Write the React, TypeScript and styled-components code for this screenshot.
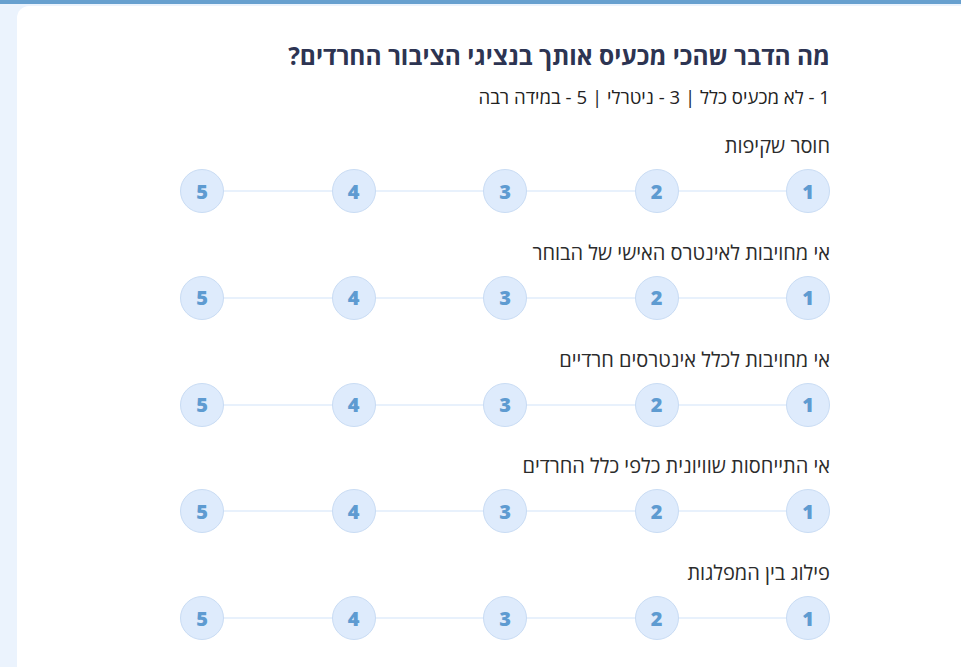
import styled, { createGlobalStyle } from "styled-components";

const GlobalStyle = createGlobalStyle`
  html, body {
    margin: 0;
    padding: 0;
    background: #ebf3fd;
  }
  body {
    font-family: "Open Sans", "DejaVu Sans", sans-serif;
  }
`;

const TopBar = styled.div`
  height: 4px;
  background: #67a0cf;
`;

const PageWrapper = styled.div`
  min-height: 663px;
  padding: 2px 0 0 17px;
  box-sizing: border-box;
  display: flex;
`;

const Card = styled.main`
  flex: 1;
  background: #ffffff;
  border-top-left-radius: 12px;
  padding: 34px 131px 0 163px;
  direction: rtl;
`;

const Title = styled.h1`
  margin: 0;
  font-size: 24.5px;
  font-weight: 700;
  line-height: 32px;
  color: #2d3452;
`;

const Legend = styled.p`
  margin: 13px 0 0;
  font-size: 18.6px;
  line-height: 24px;
  color: #222;
`;

const QuestionList = styled.div`
  margin-top: 23px;
  display: flex;
  flex-direction: column;
  gap: 25.75px;
`;

const Question = styled.section`
  display: flex;
  flex-direction: column;
  gap: 9px;
`;

const Label = styled.div`
  font-size: 20px;
  line-height: 28px;
  color: #2b2b2b;
`;

const Scale = styled.div`
  position: relative;
  display: flex;
  justify-content: space-between;
  align-items: center;

  &::before {
    content: "";
    position: absolute;
    left: 22px;
    right: 22px;
    top: 50%;
    height: 2px;
    margin-top: -1px;
    background: #e8f1fc;
  }
`;

const Option = styled.button`
  position: relative;
  width: 44px;
  height: 44px;
  border-radius: 50%;
  border: 1px solid #c9dcf4;
  background: #deebfc;
  color: #5e9bd1;
  font-family: "Open Sans", "DejaVu Sans", sans-serif;
  font-size: 20px;
  font-weight: 800;
  display: flex;
  align-items: center;
  justify-content: center;
  padding: 0;
  cursor: pointer;
`;

const questions = [
  "חוסר שקיפות",
  "אי מחויבות לאינטרס האישי של הבוחר",
  "אי מחויבות לכלל אינטרסים חרדיים",
  "אי התייחסות שוויונית כלפי כלל החרדים",
  "פילוג בין המפלגות",
];

export default function App() {
  return (
    <>
      <GlobalStyle />
      <TopBar />
      <PageWrapper>
        <Card>
          <Title>מה הדבר שהכי מכעיס אותך בנציגי הציבור החרדים?</Title>
          <Legend>1 - לא מכעיס כלל | 3 - ניטרלי | 5 - במידה רבה</Legend>
          <QuestionList>
            {questions.map(q => (
              <Question key={q}>
                <Label>{q}</Label>
                <Scale>
                  {[1, 2, 3, 4, 5].map(n => (
                    <Option key={n} type="button">{n}</Option>
                  ))}
                </Scale>
              </Question>
            ))}
          </QuestionList>
        </Card>
      </PageWrapper>
    </>
  );
}
